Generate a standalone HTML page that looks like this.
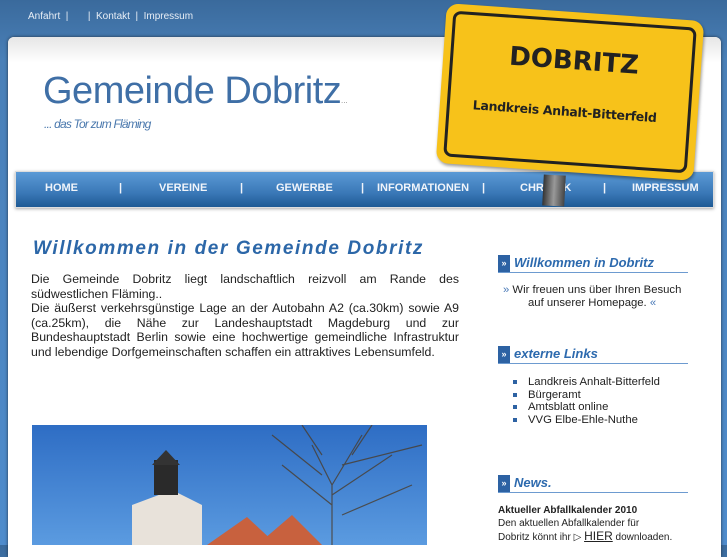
<!DOCTYPE html>
<html><head><meta charset="utf-8"><style>
*{margin:0;padding:0;box-sizing:border-box}
body{width:727px;height:545px;overflow:hidden;background:linear-gradient(#3a6a9c,#4a80b8 60px,#4f8ccc);font-family:"Liberation Sans",sans-serif;position:relative}
.top{position:absolute;top:11px;left:28px;font-size:10px;color:#e8eef6}
.panel{position:absolute;left:8px;top:37px;width:713px;height:520px;background:#fff;border-radius:6px 6px 0 0;box-shadow:0 0 3px #234}
.panel:before{content:"";position:absolute;left:0;right:0;top:0;height:26px;border-radius:6px 6px 0 0;background:linear-gradient(#e6e6e6,#fff)}
h1{position:absolute;left:43px;top:70px;font-size:38px;font-weight:normal;color:#3f6fa6;letter-spacing:-0.5px}
.sub{position:absolute;left:44px;top:117px;font-size:12px;font-style:italic;color:#4a78ad;letter-spacing:-0.8px}
.dots{position:absolute;left:341px;top:96px;font-size:8px;color:#888}
.nav{position:absolute;left:15px;top:171px;width:699px;height:37px;border:1px solid #ddd;box-shadow:0 1px 3px #aaa;background:linear-gradient(#5b9ad6,#3a78b7 60%,#1e5a94);}
.nav span{position:absolute;top:10px;font-size:11px;font-weight:bold;color:#f0f4fa}
.sign{position:absolute;left:441px;top:12px;width:258px;height:160px;background:#f7c21a;border-radius:12px;transform:rotate(4deg);box-shadow:1px 2px 3px rgba(0,0,0,.4)}
.sign .in{position:absolute;left:7px;top:7px;right:7px;bottom:7px;border:3px solid #222;border-radius:8px}
.post{position:absolute;left:543px;top:175px;width:22px;height:31px;background:linear-gradient(90deg,#333,#999,#444);transform:rotate(3deg)}
.s1{position:absolute;left:66px;top:34px;font-size:26px;font-weight:bold;color:#222;font-family:"DejaVu Sans",sans-serif}
.s2{position:absolute;left:33px;top:92px;font-size:12.5px;font-weight:bold;color:#222;font-family:"DejaVu Sans",sans-serif;letter-spacing:-0.3px}
h2{position:absolute;left:33px;top:238px;font-size:19px;font-style:italic;font-weight:bold;color:#2c67a8;letter-spacing:1.6px}
.txt{position:absolute;left:31px;top:272px;width:428px;font-size:12.3px;line-height:14.5px;color:#222;text-align:justify}
.img{position:absolute;left:32px;top:425px;width:395px;height:120px;background:linear-gradient(#2e6dc4,#5b9be0);overflow:hidden}
.head{position:absolute;left:498px;width:190px;height:18px;border-bottom:1px solid #6d9bd0}
.head b{position:absolute;left:0;top:0;width:12px;height:17px;background:#2d62a3;color:#fff;font-size:9px;text-align:center;line-height:17px}
.head i{position:absolute;left:16px;top:0;font-size:13px;font-weight:bold;color:#2d6aae}
.side{position:absolute;font-size:11.3px;color:#222}
.li{height:12.7px;line-height:12.7px;white-space:nowrap}
.li:before{content:"";display:inline-block;width:4px;height:4px;background:#2d62a3;margin-right:11px;vertical-align:middle}
</style></head><body>
<div class="top">Anfahrt &nbsp;| &nbsp; &nbsp; &nbsp; | &nbsp;Kontakt &nbsp;| &nbsp;Impressum</div>
<div class="panel"></div>
<h1>Gemeinde Dobritz</h1><div class="dots">...</div>
<div class="sub">... das Tor zum Fläming</div>
<div class="nav">
<span style="left:29px">HOME</span><span style="left:103px">|</span>
<span style="left:143px">VEREINE</span><span style="left:224px">|</span>
<span style="left:260px">GEWERBE</span><span style="left:345px">|</span>
<span style="left:361px">INFORMATIONEN</span><span style="left:466px">|</span>
<span style="left:504px">CHRONIK</span><span style="left:587px">|</span>
<span style="left:616px">IMPRESSUM</span>
</div>
<div class="post"></div>
<div class="sign"><div class="in"></div><div class="s1">DOBRITZ</div><div class="s2">Landkreis Anhalt-Bitterfeld</div></div>
<h2>Willkommen in der Gemeinde Dobritz</h2>
<div class="txt">Die Gemeinde Dobritz liegt landschaftlich reizvoll am Rande des südwestlichen Fläming..<br>Die äußerst verkehrsgünstige Lage an der Autobahn A2 (ca.30km) sowie A9 (ca.25km), die Nähe zur Landeshauptstadt Magdeburg und zur Bundeshauptstadt Berlin sowie eine hochwertige gemeindliche Infrastruktur und lebendige Dorfgemeinschaften schaffen ein attraktives Lebensumfeld.</div>
<div class="img">
<svg width="395" height="120"><g stroke="#4a3c2c" stroke-width="1.2" fill="none" opacity=".8"><path d="M300 120L300 60L280 20M300 60L330 10M300 70L360 30M290 50L240 10M310 40L390 20M300 80L250 40M310 90L380 60M290 30L270 0M320 30L340 0"/></g>
<polygon points="100,120 100,80 140,65 170,80 170,120" fill="#e8e2da"/><rect x="122" y="35" width="24" height="35" fill="#2a2a2a"/><polygon points="120,40 134,25 148,40" fill="#333"/>
<polygon points="175,120 215,92 245,120" fill="#c8613e"/><polygon points="225,120 260,90 290,120" fill="#c8613e"/></svg>
</div>
<div class="head" style="top:255px"><b>»</b><i>Willkommen in Dobritz</i></div>
<div class="side" style="left:503px;top:284px;line-height:12.5px"><span style="color:#4a7ab8">»</span> Wir freuen uns über Ihren Besuch<br><span style="padding-left:25px">auf unserer Homepage. <span style="color:#4a7ab8">«</span></span></div>
<div class="head" style="top:346px"><b>»</b><i>externe Links</i></div>
<div class="side" style="left:513px;top:376px"><div class="li">Landkreis Anhalt-Bitterfeld</div><div class="li">Bürgeramt</div><div class="li">Amtsblatt online</div><div class="li">VVG Elbe-Ehle-Nuthe</div></div>
<div class="head" style="top:475px"><b>»</b><i>News.</i></div>
<div class="side" style="left:498px;top:505px;font-size:10px;line-height:12.5px"><b>Aktueller Abfallkalender 2010</b><br>Den aktuellen Abfallkalender für<br>Dobritz könnt ihr ▷ <u style="font-size:12px">HIER</u> downloaden.</div>
</body></html>
